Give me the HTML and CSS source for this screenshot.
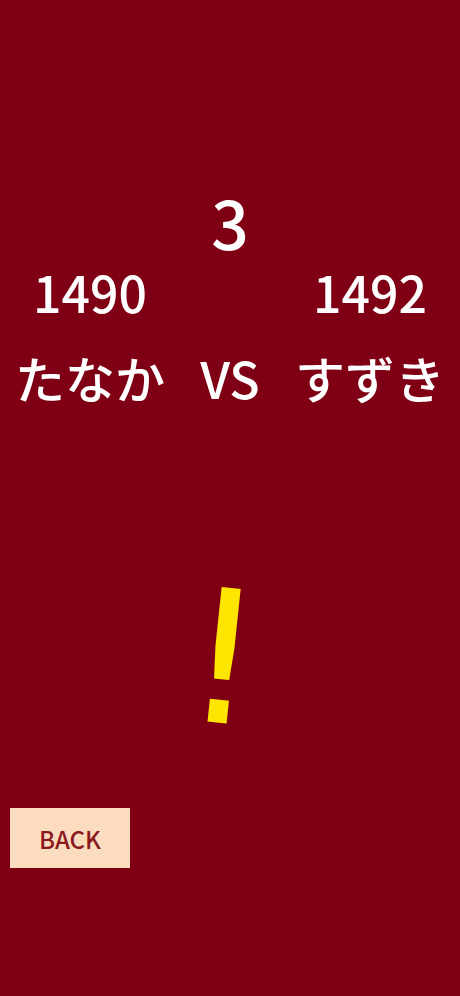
FILE: index.html
```html
<!DOCTYPE html>
<html lang="ja">
<head>
    <meta charset="UTF-8">
    <meta name="viewport" content="width=device-width, initial-scale=1.0">
    <title>Match</title>
    <link rel="stylesheet" href="styles.css">
</head>
<body>
    <div class="screen">
        <div class="count">3</div>

        <div class="versus">
            <div class="rate">1490</div>
            <div></div>
            <div class="rate">1492</div>
            <div class="name">たなか</div>
            <div class="name">VS</div>
            <div class="name">すずき</div>
        </div>

        <div class="alert">
            <span class="mark">!</span>
        </div>

        <button class="back-btn">BACK</button>
    </div>
</body>
</html>
```

FILE: styles.css
```css
html, body {
    margin: 0;
    padding: 0;
    background: #7f0014;
}
body {
    font-family: 'Noto Sans CJK JP', 'Noto Sans', sans-serif;
    font-weight: 500;
    color: #fff;
}
.screen {
    width: 460px;
    height: 996px;
    padding-top: 188px;
    box-sizing: border-box;
}
.count {
    font-size: 66px;
    line-height: 66px;
    text-align: center;
}
.versus {
    display: grid;
    grid-template-columns: 180px 100px 180px;
    row-gap: 36px;
    margin-top: 12px;
    text-align: center;
}
.rate {
    font-size: 50px;
    line-height: 50px;
}
.name {
    font-size: 50px;
    line-height: 50px;
    white-space: nowrap;
}
.alert {
    height: 160px;
    margin-top: 177px;
    display: flex;
    justify-content: center;
    align-items: center;
}
.mark {
    display: block;
    color: #ffe600;
    font-family: 'DejaVu Sans', sans-serif;
    font-weight: normal;
    font-size: 128px;
    line-height: 160px;
    transform: translateX(-6px) rotate(6deg) scale(1.5, 1.45);
}
.back-btn {
    display: block;
    margin: 69px 0 0 10px;
    width: 120px;
    height: 60px;
    border: none;
    padding: 0;
    background: #fbdcbf;
    color: #8a1a1e;
    font-family: 'Noto Sans CJK JP', 'Noto Sans', sans-serif;
    font-weight: 500;
    font-size: 24px;
}
```
